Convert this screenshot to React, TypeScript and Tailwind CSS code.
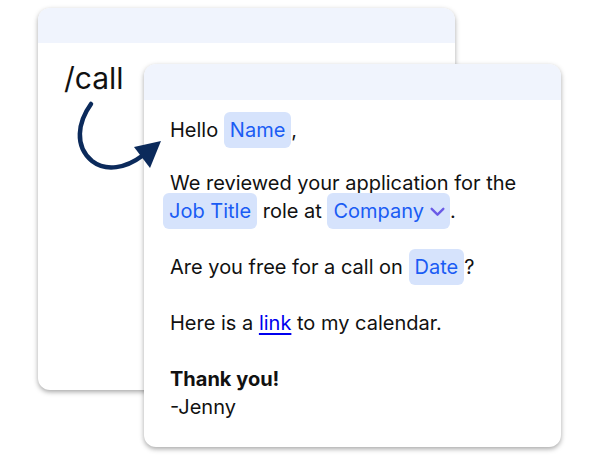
import React from "react";

function Chip({ children, className = "" }: { children: React.ReactNode; className?: string }) {
  return (
    <span className={`rounded-md bg-[#d6e3fc] px-[6px] py-[6px] text-[#1a5cf4] ${className}`}>{children}</span>
  );
}

export default function App() {
  return (
    <div className="relative h-[460px] w-[600px] overflow-hidden bg-white font-['Inter','Liberation_Sans',sans-serif] text-[#111]">
      {/* back card */}
      <div className="ml-[38px] mt-[8px] h-[382px] w-[417px] overflow-hidden rounded-xl bg-white shadow-[0_2px_5px_rgba(0,0,0,0.35)]">
        <div className="h-[35px] bg-[#f0f4fd]" />
        <p className="pl-[26px] pt-[15px] text-[30px] leading-[40px]">/call</p>
      </div>

      {/* front card */}
      <div className="absolute left-[144px] top-[64px] h-[383px] w-[417px] overflow-hidden rounded-xl bg-white shadow-[0_2px_5px_rgba(0,0,0,0.35)]">
        <div className="h-[36px] bg-[#f0f4fd]" />
        <div className="pl-[26px] pt-[16px] text-[20px] leading-[28px]">
          <p className="mb-[25px]">
            Hello <Chip>Name</Chip>,
          </p>
          <p className="mb-[28px]">
            We reviewed your application for the
            <br />
            <Chip className="-ml-[7px]">Job Title</Chip> role at{" "}
            <Chip className="pr-[4px]">
              Company
              <svg className="ml-[5px] inline-block align-[-2px]" width="17" height="17" viewBox="0 0 16 16" fill="none">
                <path d="M2.5 5.5 L8 11 L13.5 5.5" stroke="#6a5ae6" strokeWidth="2.2" strokeLinecap="round" strokeLinejoin="round" />
              </svg>
            </Chip>
            .
          </p>
          <p className="mb-[28px]">
            Are you free for a call on <Chip>Date</Chip>?
          </p>
          <p className="mb-[28px]">
            Here is a <a className="text-[#0000ee] underline underline-offset-[3px]">link</a> to my calendar.
          </p>
          <p className="font-bold">Thank you!</p>
          <p>-Jenny</p>
        </div>
      </div>

      {/* arrow */}
      <svg className="absolute left-[70px] top-[98px]" width="100" height="80" viewBox="0 0 100 80" fill="none">
        <path d="M21 6 C8 24 4 48 22 63 C36 74 56 70 72 58" stroke="#0b2a5b" strokeWidth="4.5" strokeLinecap="round" />
        <path d="M91 43 L64 49 L80 70 Z" fill="#0b2a5b" />
      </svg>
    </div>
  );
}
